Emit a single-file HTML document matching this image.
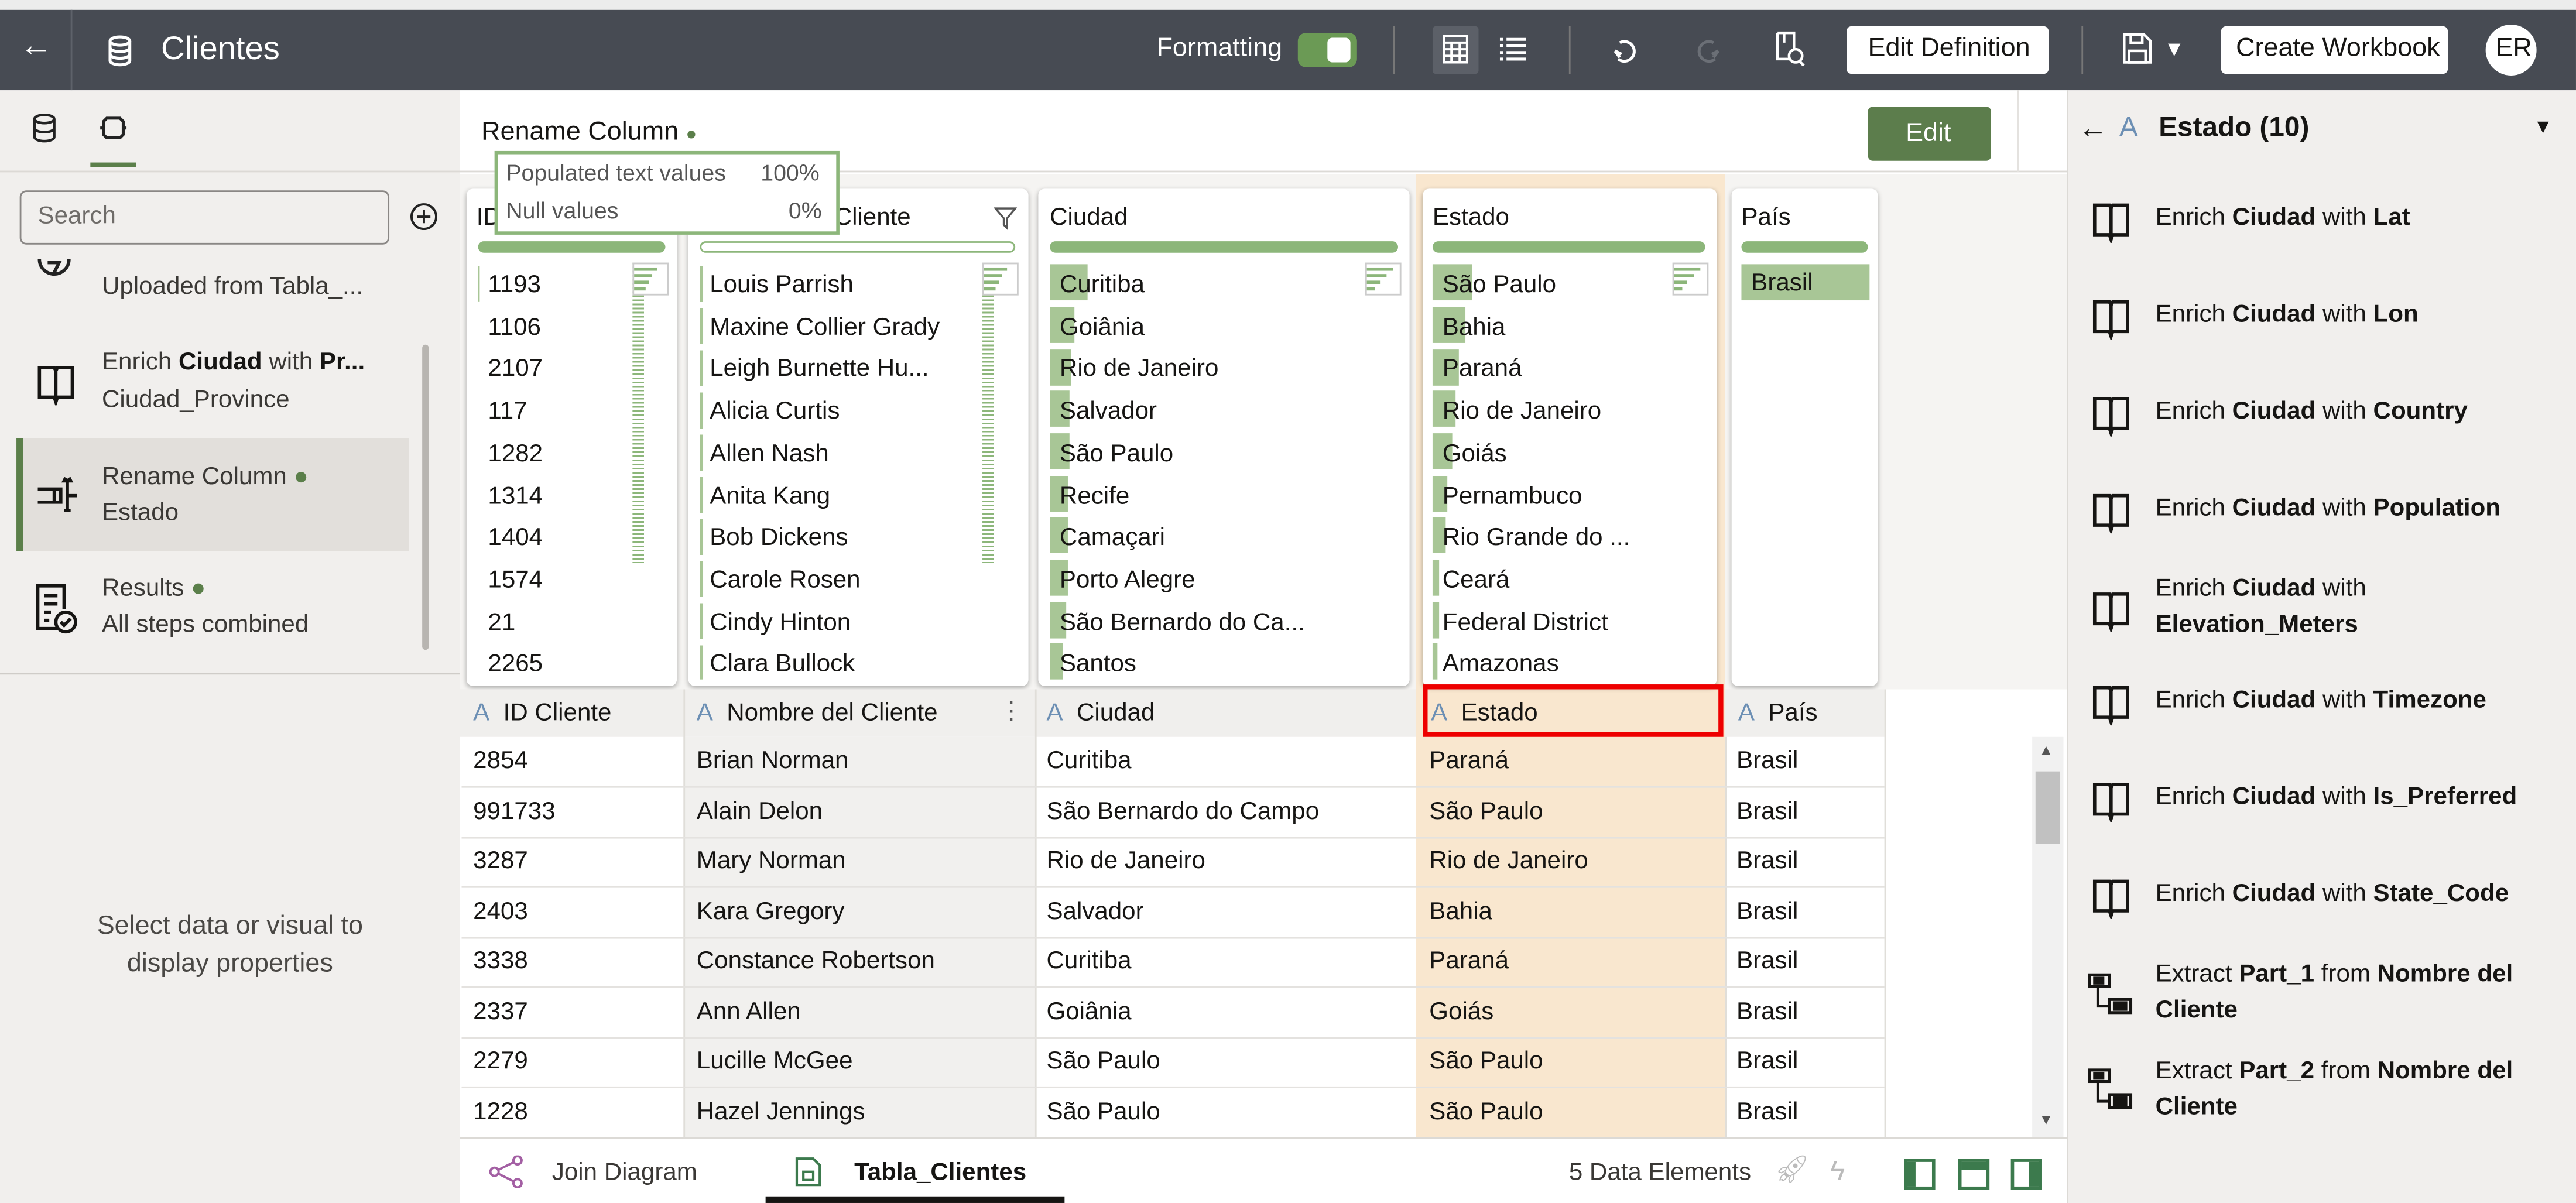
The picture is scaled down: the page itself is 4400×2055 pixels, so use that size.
<!DOCTYPE html>
<html><head><meta charset="utf-8">
<style>
*{margin:0;padding:0;box-sizing:border-box}
html,body{width:4400px;height:2055px;overflow:hidden;background:#fff}
#w{position:absolute;left:0;top:0;width:1568px;height:733px;transform:scale(2.8061,2.8035);transform-origin:0 0;font-family:"Liberation Sans",sans-serif;color:#161513;font-size:14px;background:#fff}
.a{position:absolute}
.t{position:absolute;white-space:nowrap}
.card{position:absolute;background:#fff;border-radius:4px;box-shadow:0 1px 3px rgba(0,0,0,.3)}
.bar{position:absolute;height:7px;border-radius:4px;background:#8cb67a}
.hb{position:absolute;background:#a8c696;height:22px}
.row{position:absolute;left:281px;width:866px;height:31px;border-bottom:1px solid #e4e2df;font-size:15px}
.c{position:absolute;top:6px;white-space:nowrap}
.ri{position:absolute;left:1312px;font-size:15px;line-height:22px}
.book{position:absolute;left:1273px;width:22px;height:20px}
.mh{position:absolute;width:22px;height:20px;border:1px solid #ccc;background:#fff}
.mh i{position:absolute;left:0;height:2px;background:#8cb67a}
</style></head><body><div id="w">
<!-- top bar -->
<div class="a" style="left:0;top:0;width:1568px;height:6px;background:#ececec"></div>
<div class="a" style="left:0;top:6px;width:1568px;height:49px;background:#474b53"></div>
<div class="a" style="left:43px;top:6px;width:1px;height:49px;background:#5e626a"></div>
<div class="t" style="left:12px;top:17px;color:#fff;font-size:20px">←</div>
<svg class="a" style="left:64px;top:21px" width="18" height="20" viewBox="0 0 18 20" fill="none" stroke="#fff" stroke-width="1.8"><ellipse cx="9" cy="4" rx="6" ry="2.5"/><path d="M3 4v12c0 1.5 3 2.5 6 2.5s6-1 6-2.5V4M3 8c0 1.5 3 2.5 6 2.5s6-1 6-2.5M3 12c0 1.5 3 2.5 6 2.5s6-1 6-2.5"/></svg>
<div class="t" style="left:98px;top:19px;color:#fff;font-size:20px">Clientes</div>
<div class="t" style="left:704px;top:21px;color:#fff;font-size:16px">Formatting</div>
<div class="a" style="left:790px;top:20px;width:36px;height:21px;border-radius:5px;background:#6b9a55"></div>
<div class="a" style="left:808px;top:23px;width:14px;height:15px;border-radius:3px;background:#fff"></div>
<div class="a" style="left:848px;top:16px;width:1px;height:29px;background:#777"></div>
<div class="a" style="left:872px;top:16px;width:28px;height:29px;background:#5c6068;border-radius:2px"></div>
<svg class="a" style="left:878px;top:21px" width="16" height="18" viewBox="0 0 16 18" fill="none" stroke="#fff" stroke-width="1.4"><rect x="1" y="1" width="14" height="16"/><path d="M1 5h14M1 9h14M1 13h14M5.5 5v12M10.5 5v12"/></svg>
<svg class="a" style="left:912px;top:22px" width="18" height="16" viewBox="0 0 18 16" stroke="#fff" stroke-width="1.8"><path d="M1 2h2M1 6h2M1 10h2M1 14h2M5 2h12M5 6h12M5 10h12M5 14h12"/></svg>
<div class="a" style="left:955px;top:16px;width:1px;height:29px;background:#777"></div>
<svg class="a" style="left:981px;top:21px" width="18" height="18" viewBox="0 0 18 18" fill="none" stroke="#fff" stroke-width="1.8"><path d="M5 14 2 10M2 10l4 2M4 15a6 6 0 1 0 1-10"/></svg>
<svg class="a" style="left:1030px;top:21px" width="18" height="18" viewBox="0 0 18 18" fill="none" stroke="#6b6f76" stroke-width="1.8"><path d="M13 14l3-4M16 10l-4 2M14 15a6 6 0 1 1-1-10"/></svg>
<svg class="a" style="left:1080px;top:19px" width="20" height="22" viewBox="0 0 20 22" fill="none" stroke="#fff" stroke-width="1.6"><path d="M2 1h10v10M2 1v16h7M6 1v6"/><circle cx="13" cy="15" r="4"/><path d="M15 18l3 3"/></svg>
<div class="a" style="left:1124px;top:16px;width:123px;height:29px;background:#fff;border-radius:3px"></div>
<div class="t" style="left:1137px;top:21px;font-size:16px">Edit Definition</div>
<div class="a" style="left:1267px;top:16px;width:1px;height:29px;background:#777"></div>
<svg class="a" style="left:1292px;top:20px" width="18" height="19" viewBox="0 0 18 19" fill="none" stroke="#fff" stroke-width="1.6"><path d="M1 1h12l4 4v13H1z"/><rect x="5" y="1" width="7" height="5"/><rect x="4" y="11" width="10" height="7"/></svg>
<div class="t" style="left:1317px;top:22px;color:#fff;font-size:13px">▼</div>
<div class="a" style="left:1352px;top:16px;width:138px;height:29px;background:#fff;border-radius:3px"></div>
<div class="t" style="left:1361px;top:21px;font-size:16px">Create Workbook</div>
<div class="a" style="left:1513px;top:15px;width:31px;height:31px;background:#fff;border-radius:50%"></div>
<div class="t" style="left:1519px;top:21px;font-size:16px">ER</div>

<!-- left panel -->
<div class="a" style="left:0;top:55px;width:280px;height:678px;background:#f1efed"></div>
<svg class="a" style="left:19px;top:69px" width="16" height="18" viewBox="0 0 16 18" fill="none" stroke="#222" stroke-width="1.6"><ellipse cx="8" cy="3.5" rx="6" ry="2.5"/><path d="M2 3.5v11c0 1.4 2.7 2.5 6 2.5s6-1.1 6-2.5v-11M2 9c0 1.4 2.7 2.5 6 2.5S14 10.4 14 9"/></svg>
<svg class="a" style="left:60px;top:71px" width="18" height="14" viewBox="0 0 18 14" fill="none" stroke="#222" stroke-width="1.8"><path d="M1 7h2M15 7h2M5 1h8l2 2v8l-2 2H5l-2-2V3z"/></svg>
<div class="a" style="left:55px;top:99px;width:28px;height:3px;background:#5b7f4a"></div>
<div class="a" style="left:0;top:104px;width:280px;height:1px;background:#dcd9d5"></div>
<div class="a" style="left:12px;top:116px;width:225px;height:33px;border:1px solid #8a8785;border-radius:4px;background:#f1efed"></div>
<div class="t" style="left:23px;top:123px;color:#6f6c69;font-size:15px">Search</div>
<svg class="a" style="left:249px;top:123px" width="18" height="18" viewBox="0 0 18 18" fill="none" stroke="#222" stroke-width="1.4"><circle cx="9" cy="9" r="7.5"/><path d="M9 5v8M5 9h8"/></svg>
<svg class="a" style="left:21px;top:155px" width="24" height="20" viewBox="0 0 24 20" fill="none" stroke="#222" stroke-width="2"><path d="M3 3a9 9 0 0 0 18 0"/><path d="M8 5h7l-4 8"/></svg>
<div class="t" style="left:62px;top:166px;font-size:15px;color:#3a3835">Uploaded from Tabla_...</div>
<svg class="book" style="left:22px;top:221px;width:24px;height:26px" viewBox="0 0 24 26" fill="none" stroke="#161513" stroke-width="2"><path d="M2 3v18h9l1 3 1-3h9V3h-9l-1 2-1-2z M12 5v16"/></svg>
<div class="t" style="left:62px;top:212px;font-size:15px;color:#3a3835">Enrich <b style="color:#161513">Ciudad</b> with <b style="color:#161513">Pr...</b></div>
<div class="t" style="left:62px;top:235px;font-size:15px;color:#3a3835">Ciudad_Province</div>
<div class="a" style="left:10px;top:267px;width:239px;height:69px;background:#e2dfdb"></div>
<div class="a" style="left:10px;top:267px;width:4px;height:69px;background:#5b7f4a"></div>
<svg class="a" style="left:22px;top:290px" width="26" height="24" viewBox="0 0 26 24" fill="none" stroke="#161513" stroke-width="2"><path d="M1 8h14v8H1M11 8v8M18 1l-1 2h4l-1-2M19 3v18M17 21h4M18 12h7"/></svg>
<div class="t" style="left:62px;top:282px;font-size:15px;color:#3a3835">Rename Column <span style="color:#5b7f4a">●</span></div>
<div class="t" style="left:62px;top:304px;font-size:15px;color:#3a3835">Estado</div>
<svg class="a" style="left:21px;top:355px" width="28" height="32" viewBox="0 0 28 32" fill="none" stroke="#161513" stroke-width="2"><path d="M14 28H2V2h16v14"/><path d="M6 8h8M6 13h8M6 18h4M6 23h3"/><circle cx="19" cy="24" r="6"/><path d="M16 24l2 2 4-4"/></svg>
<div class="t" style="left:62px;top:350px;font-size:15px;color:#3a3835">Results <span style="color:#5b7f4a">●</span></div>
<div class="t" style="left:62px;top:372px;font-size:15px;color:#3a3835">All steps combined</div>
<div class="a" style="left:257px;top:210px;width:4px;height:186px;background:#b8b5b1;border-radius:2px"></div>
<div class="a" style="left:0;top:410px;width:280px;height:1px;background:#cfccc8"></div>
<div class="t" style="left:0;top:553px;width:280px;text-align:center;font-size:16px;color:#4a4845;line-height:23px;white-space:normal">Select data or visual to<br>display properties</div>

<!-- center header -->
<div class="a" style="left:280px;top:55px;width:978px;height:50px;background:#fff;border-bottom:1px solid #dcdad6"></div>
<div class="t" style="left:293px;top:72px;font-size:16px">Rename Column <span style="color:#5b7f4a;font-size:11px">●</span></div>
<div class="a" style="left:1137px;top:65px;width:75px;height:33px;background:#5c7d4c;border-radius:3px"></div>
<div class="t" style="left:1160px;top:73px;color:#fff;font-size:16px">Edit</div>
<div class="a" style="left:1228px;top:55px;width:1px;height:50px;background:#e4e2df"></div>
<!-- profile area -->
<div class="a" style="left:280px;top:106px;width:978px;height:314px;background:#f5f4f2"></div>
<div class="a" style="left:862px;top:106px;width:188px;height:587px;background:#f9e7cf"></div>
<div class="card" style="left:284px;top:115px;width:128px;height:303px"></div>
<div class="card" style="left:419px;top:115px;width:207px;height:303px"></div>
<div class="card" style="left:632px;top:115px;width:226px;height:303px"></div>
<div class="card" style="left:866px;top:115px;width:179px;height:303px"></div>
<div class="card" style="left:1054px;top:115px;width:89px;height:303px"></div>
<div class="t" style="left:290px;top:124px;font-size:15px">ID <span style="color:#bbb">Cliente</span></div>
<div class="t" style="left:426px;top:124px;font-size:15px"><span style="color:#ccc">Nombre del</span> Cliente</div>
<svg class="a" style="left:605px;top:126px" width="14" height="14" viewBox="0 0 14 14" fill="none" stroke="#555" stroke-width="1.2"><path d="M1 1h12L8 7v6L6 11V7z"/></svg>
<div class="t" style="left:639px;top:124px;font-size:15px">Ciudad</div>
<div class="t" style="left:872px;top:124px;font-size:15px">Estado</div>
<div class="t" style="left:1060px;top:124px;font-size:15px">País</div>
<div class="bar" style="left:291px;top:147px;width:114px"></div>
<div class="bar" style="left:426px;top:147px;width:192px;background:#fff;border:1.5px solid #8cb67a"></div>
<div class="bar" style="left:639px;top:147px;width:212px"></div>
<div class="bar" style="left:872px;top:147px;width:166px"></div>
<div class="bar" style="left:1060px;top:147px;width:77px"></div>
<!-- mini histograms -->
<div class="a" style="left:385px;top:160px;width:7px;height:183px;background:repeating-linear-gradient(#8cb67a 0 1px,#fff 1px 2.5px)"></div>
<div class="a" style="left:598px;top:160px;width:7px;height:183px;background:repeating-linear-gradient(#8cb67a 0 1px,#fff 1px 2.5px)"></div>
<div class="mh" style="left:385px;top:160px"><i style="top:2px;width:14px"></i><i style="top:6px;width:11px"></i><i style="top:10px;width:9px"></i><i style="top:14px;width:7px"></i></div>
<div class="mh" style="left:598px;top:160px"><i style="top:2px;width:14px"></i><i style="top:6px;width:11px"></i><i style="top:10px;width:9px"></i><i style="top:14px;width:7px"></i></div>
<div class="mh" style="left:831px;top:160px"><i style="top:2px;width:16px"></i><i style="top:6px;width:12px"></i><i style="top:10px;width:8px"></i><i style="top:14px;width:5px"></i></div>
<div class="mh" style="left:1018px;top:160px"><i style="top:2px;width:16px"></i><i style="top:6px;width:12px"></i><i style="top:10px;width:8px"></i><i style="top:14px;width:5px"></i></div>
<div class="a" style="left:291px;top:162px;width:1px;height:22px;background:#a8c696"></div>
<div class="a" style="left:426px;top:162px;width:2px;height:252px;background:repeating-linear-gradient(#a8c696 0 22px,#fff 22px 25.7px)"></div>
<!-- card values -->
<div class="t" style="left:297px;top:161px;font-size:15px;line-height:25.7px">1193<br>1106<br>2107<br>117<br>1282<br>1314<br>1404<br>1574<br>21<br>2265</div>
<div class="t" style="left:432px;top:161px;font-size:15px;line-height:25.7px">Louis Parrish<br>Maxine Collier Grady<br>Leigh Burnette Hu...<br>Alicia Curtis<br>Allen Nash<br>Anita Kang<br>Bob Dickens<br>Carole Rosen<br>Cindy Hinton<br>Clara Bullock</div>
<div class="hb" style="left:639px;top:161px;width:23px"></div><div class="hb" style="left:639px;top:187px;width:15px"></div><div class="hb" style="left:639px;top:213px;width:13px"></div><div class="hb" style="left:639px;top:238px;width:12px"></div><div class="hb" style="left:639px;top:264px;width:12px"></div><div class="hb" style="left:639px;top:290px;width:11px"></div><div class="hb" style="left:639px;top:315px;width:11px"></div><div class="hb" style="left:639px;top:341px;width:11px"></div><div class="hb" style="left:639px;top:367px;width:10px"></div><div class="hb" style="left:639px;top:392px;width:8px"></div>
<div class="hb" style="left:872px;top:161px;width:24px"></div><div class="hb" style="left:872px;top:187px;width:20px"></div><div class="hb" style="left:872px;top:213px;width:16px"></div><div class="hb" style="left:872px;top:238px;width:14px"></div><div class="hb" style="left:872px;top:264px;width:12px"></div><div class="hb" style="left:872px;top:290px;width:9px"></div><div class="hb" style="left:872px;top:315px;width:8px"></div><div class="hb" style="left:872px;top:341px;width:4px"></div><div class="hb" style="left:872px;top:367px;width:4px"></div><div class="hb" style="left:872px;top:392px;width:3px"></div>
<div class="hb" style="left:1060px;top:161px;width:78px"></div>
<div class="t" style="left:645px;top:161px;font-size:15px;line-height:25.7px">Curitiba<br>Goiânia<br>Rio de Janeiro<br>Salvador<br>São Paulo<br>Recife<br>Camaçari<br>Porto Alegre<br>São Bernardo do Ca...<br>Santos</div>
<div class="t" style="left:878px;top:161px;font-size:15px;line-height:25.7px">São Paulo<br>Bahia<br>Paraná<br>Rio de Janeiro<br>Goiás<br>Pernambuco<br>Rio Grande do ...<br>Ceará<br>Federal District<br>Amazonas</div>
<div class="t" style="left:1066px;top:164px;font-size:15px">Brasil</div>
<!-- tooltip -->
<div class="a" style="left:301px;top:92px;width:210px;height:51px;background:#fff;border:2px solid #8cb67a"></div>
<div class="t" style="left:308px;top:97px;font-size:14px;color:#555">Populated text values</div><div class="t" style="left:463px;top:97px;font-size:14px;color:#555">100%</div>
<div class="t" style="left:308px;top:120px;font-size:14px;color:#555">Null values</div><div class="t" style="left:480px;top:120px;font-size:14px;color:#555">0%</div>
<!-- column headers -->
<div class="a" style="left:280px;top:420px;width:582px;height:29px;background:#f0efed"></div>
<div class="a" style="left:1050px;top:420px;width:97px;height:29px;background:#f0efed"></div>
<div class="a" style="left:866px;top:417px;width:183px;height:32px;border:3px solid #e00"></div>
<div class="t" style="left:288px;top:426px;font-size:15px"><span style="color:#6c8fb4">A</span>&nbsp; ID Cliente</div>
<div class="t" style="left:424px;top:426px;font-size:15px"><span style="color:#6c8fb4">A</span>&nbsp; Nombre del Cliente</div>
<div class="t" style="left:608px;top:424px;font-size:15px;color:#555">⋮</div>
<div class="t" style="left:637px;top:426px;font-size:15px"><span style="color:#6c8fb4">A</span>&nbsp; Ciudad</div>
<div class="t" style="left:871px;top:426px;font-size:15px"><span style="color:#6c8fb4">A</span>&nbsp; Estado</div>
<div class="t" style="left:1058px;top:426px;font-size:15px"><span style="color:#6c8fb4">A</span>&nbsp; País</div>
<!-- data grid -->
<div class="a" style="left:416px;top:449px;width:214px;height:244px;background:#f1f0ee"></div>
<div class="a" style="left:416px;top:420px;width:1px;height:273px;background:#e0ded9"></div>
<div class="a" style="left:630px;top:420px;width:1px;height:273px;background:#e0ded9"></div>
<div class="a" style="left:1050px;top:449px;width:1px;height:244px;background:#e0ded9"></div>
<div class="a" style="left:1147px;top:420px;width:1px;height:273px;background:#e0ded9"></div>
<div class="a" style="left:1237px;top:449px;width:19px;height:244px;background:#f1f1f1"></div>
<div class="a" style="left:1239px;top:470px;width:15px;height:44px;background:#c1c1c1"></div>
<div class="t" style="left:1241px;top:452px;font-size:9px;color:#555">▲</div>
<div class="t" style="left:1241px;top:677px;font-size:9px;color:#555">▼</div>
<div class="row" style="top:449px"><span class="c" style="left:7px">2854</span><span class="c" style="left:143px">Brian Norman</span><span class="c" style="left:356px">Curitiba</span><span class="c" style="left:589px">Paraná</span><span class="c" style="left:776px">Brasil</span></div>
<div class="row" style="top:480px"><span class="c" style="left:7px">991733</span><span class="c" style="left:143px">Alain Delon</span><span class="c" style="left:356px">São Bernardo do Campo</span><span class="c" style="left:589px">São Paulo</span><span class="c" style="left:776px">Brasil</span></div>
<div class="row" style="top:510px"><span class="c" style="left:7px">3287</span><span class="c" style="left:143px">Mary Norman</span><span class="c" style="left:356px">Rio de Janeiro</span><span class="c" style="left:589px">Rio de Janeiro</span><span class="c" style="left:776px">Brasil</span></div>
<div class="row" style="top:541px"><span class="c" style="left:7px">2403</span><span class="c" style="left:143px">Kara Gregory</span><span class="c" style="left:356px">Salvador</span><span class="c" style="left:589px">Bahia</span><span class="c" style="left:776px">Brasil</span></div>
<div class="row" style="top:571px"><span class="c" style="left:7px">3338</span><span class="c" style="left:143px">Constance Robertson</span><span class="c" style="left:356px">Curitiba</span><span class="c" style="left:589px">Paraná</span><span class="c" style="left:776px">Brasil</span></div>
<div class="row" style="top:602px"><span class="c" style="left:7px">2337</span><span class="c" style="left:143px">Ann Allen</span><span class="c" style="left:356px">Goiânia</span><span class="c" style="left:589px">Goiás</span><span class="c" style="left:776px">Brasil</span></div>
<div class="row" style="top:632px"><span class="c" style="left:7px">2279</span><span class="c" style="left:143px">Lucille McGee</span><span class="c" style="left:356px">São Paulo</span><span class="c" style="left:589px">São Paulo</span><span class="c" style="left:776px">Brasil</span></div>
<div class="row" style="top:663px;border:none"><span class="c" style="left:7px">1228</span><span class="c" style="left:143px">Hazel Jennings</span><span class="c" style="left:356px">São Paulo</span><span class="c" style="left:589px">São Paulo</span><span class="c" style="left:776px">Brasil</span></div>
<!-- bottom bar -->
<div class="a" style="left:280px;top:693px;width:978px;height:40px;background:#fff;border-top:1px solid #dcdad6"></div>
<svg class="a" style="left:297px;top:704px" width="22" height="20" viewBox="0 0 22 20" fill="none" stroke="#a35fa3" stroke-width="1.4"><circle cx="4" cy="10" r="2.5"/><circle cx="18" cy="3" r="2.5"/><circle cx="18" cy="17" r="2.5"/><path d="M6 9l10-5M6 11l10 5"/></svg>
<div class="t" style="left:336px;top:706px;font-size:15px;color:#3a3835">Join Diagram</div>
<svg class="a" style="left:484px;top:705px" width="16" height="18" viewBox="0 0 16 18" fill="none" stroke="#3c7a4d" stroke-width="1.5"><path d="M1 1h10l4 4v12H1z"/><path d="M5 9h6v5H5z"/></svg>
<div class="t" style="left:520px;top:706px;font-size:15px;font-weight:bold">Tabla_Clientes</div>
<div class="a" style="left:466px;top:729px;width:182px;height:4px;background:#161513"></div>
<div class="t" style="left:955px;top:706px;font-size:15px;color:#3a3835">5 Data Elements</div>
<div class="t" style="left:1080px;top:703px;font-size:17px;color:#bbb">🚀︎</div>
<div class="t" style="left:1114px;top:704px;font-size:17px;color:#bbb">ϟ</div>
<div class="a" style="left:1159px;top:706px;width:19px;height:19px;border:2px solid #3c7a4d"></div><div class="a" style="left:1161px;top:708px;width:5px;height:15px;background:#3c7a4d"></div>
<div class="a" style="left:1192px;top:706px;width:19px;height:19px;border:2px solid #3c7a4d"></div><div class="a" style="left:1194px;top:708px;width:15px;height:5px;background:#3c7a4d"></div>
<div class="a" style="left:1224px;top:706px;width:19px;height:19px;border:2px solid #3c7a4d"></div><div class="a" style="left:1235px;top:708px;width:6px;height:15px;background:#3c7a4d"></div>
<!-- right panel -->
<div class="a" style="left:1258px;top:55px;width:310px;height:678px;background:#f1efed;border-left:1px solid #dcdad6"></div>
<div class="t" style="left:1265px;top:68px;font-size:18px">←</div>
<div class="t" style="left:1290px;top:68px;font-size:17px;color:#6c8fb4">A</div>
<div class="t" style="left:1314px;top:68px;font-size:17px;font-weight:bold">Estado (10)</div>
<div class="t" style="left:1542px;top:70px;font-size:12px">▼</div>
<svg style="display:none"><symbol id="bk" viewBox="0 0 24 26"><path d="M2 3v18h9l1 3 1-3h9V3h-9l-1 2-1-2z M12 5v16" fill="none" stroke="#161513" stroke-width="2"/></symbol></svg>
<svg class="book" style="top:122px;width:24px;height:26px"><use href="#bk"/></svg><div class="ri" style="top:122px">Enrich <b>Ciudad</b> with <b>Lat</b></div>
<svg class="book" style="top:181px;width:24px;height:26px"><use href="#bk"/></svg><div class="ri" style="top:181px">Enrich <b>Ciudad</b> with <b>Lon</b></div>
<svg class="book" style="top:240px;width:24px;height:26px"><use href="#bk"/></svg><div class="ri" style="top:240px">Enrich <b>Ciudad</b> with <b>Country</b></div>
<svg class="book" style="top:299px;width:24px;height:26px"><use href="#bk"/></svg><div class="ri" style="top:299px">Enrich <b>Ciudad</b> with <b>Population</b></div>
<svg class="book" style="top:359px;width:24px;height:26px"><use href="#bk"/></svg><div class="ri" style="top:348px">Enrich <b>Ciudad</b> with<br><b>Elevation_Meters</b></div>
<svg class="book" style="top:416px;width:24px;height:26px"><use href="#bk"/></svg><div class="ri" style="top:416px">Enrich <b>Ciudad</b> with <b>Timezone</b></div>
<svg class="book" style="top:475px;width:24px;height:26px"><use href="#bk"/></svg><div class="ri" style="top:475px">Enrich <b>Ciudad</b> with <b>Is_Preferred</b></div>
<svg class="book" style="top:534px;width:24px;height:26px"><use href="#bk"/></svg><div class="ri" style="top:534px">Enrich <b>Ciudad</b> with <b>State_Code</b></div>
<svg class="a" style="left:1271px;top:592px" width="28" height="28" viewBox="0 0 28 28" fill="none" stroke="#161513" stroke-width="1.8"><rect x="1" y="2" width="12" height="7"/><rect x="13" y="17" width="13" height="8"/><path d="M6 9v12h7"/><rect x="4" y="4" width="5" height="3" fill="#161513"/><rect x="16" y="19" width="7" height="4" fill="#161513"/></svg>
<div class="ri" style="top:583px">Extract <b>Part_1</b> from <b>Nombre del</b><br><b>Cliente</b></div>
<svg class="a" style="left:1271px;top:650px" width="28" height="28" viewBox="0 0 28 28" fill="none" stroke="#161513" stroke-width="1.8"><rect x="1" y="2" width="12" height="7"/><rect x="13" y="17" width="13" height="8"/><path d="M6 9v12h7"/><rect x="4" y="4" width="5" height="3" fill="#161513"/><rect x="16" y="19" width="7" height="4" fill="#161513"/></svg>
<div class="ri" style="top:642px">Extract <b>Part_2</b> from <b>Nombre del</b><br><b>Cliente</b></div>
</div></body></html>
